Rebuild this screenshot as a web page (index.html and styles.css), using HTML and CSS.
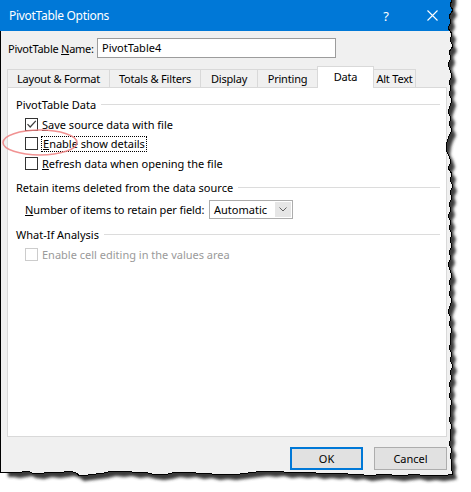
FILE: index.html
```html
<!DOCTYPE html>
<html>
<head>
<meta charset="utf-8">
<title>PivotTable Options</title>
<link rel="stylesheet" href="styles.css">
</head>
<body>
<div class="dialog">
  <div class="titlebar">
    <span class="title">PivotTable Options</span>
    <span class="tbtn help">?</span>
    <span class="tbtn close"><svg width="11" height="11" viewBox="0 0 11 11"><path d="M0.5 0.5L10.5 10.5M10.5 0.5L0.5 10.5" stroke="#fff" stroke-width="1.1" fill="none"/></svg></span>
  </div>
  <div class="body">
    <div class="name-row">
      <span class="name-label">PivotTable <u>N</u>ame:</span>
      <div class="textbox">PivotTable4</div>
    </div>
    <div class="tabs">
      <div class="tab t1">Layout &amp; Format</div>
      <div class="tab t2">Totals &amp; Filters</div>
      <div class="tab t3">Display</div>
      <div class="tab t4">Printing</div>
      <div class="tab t5 active">Data</div>
      <div class="tab t6">Alt Text</div>
    </div>
    <div class="panel">
      <div class="group g1"><span>PivotTable Data</span><span class="rule"></span></div>
      <div class="check-row first">
        <span class="box"><svg width="11" height="11" viewBox="0 0 11 11"><path d="M1.5 5.2L4.2 8L9.8 1.8" stroke="#3c3c3c" stroke-width="1.2" fill="none"/></svg></span>
        <span class="lbl"><u>S</u>ave source data with file</span>
      </div>
      <div class="check-row">
        <span class="box"></span>
        <span class="lbl focus"><u>E</u>nable show details</span>
      </div>
      <div class="check-row">
        <span class="box"></span>
        <span class="lbl"><u>R</u>efresh data when opening the file</span>
      </div>
      <div class="group g2"><span>Retain items deleted from the data source</span><span class="rule"></span></div>
      <div class="combo-row">
        <span class="combo-label"><u>N</u>umber of items to retain per field:</span>
        <div class="combo">
          <span class="combo-text">Automatic</span>
          <span class="combo-btn"><svg width="8" height="5" viewBox="0 0 8 5"><path d="M0.5 0.5L4 4L7.5 0.5" stroke="#606060" stroke-width="1" fill="none"/></svg></span>
        </div>
      </div>
      <div class="group g3"><span>What-If Analysis</span><span class="rule"></span></div>
      <div class="check-row disabled">
        <span class="box"></span>
        <span class="lbl">Enable cell editing in the values area</span>
      </div>
    </div>
    <div class="buttons">
      <div class="btn default">OK</div>
      <div class="btn">Cancel</div>
    </div>
  </div>

  <svg class="torn" width="471" height="492" viewBox="0 0 471 492">
    <defs>
      <clipPath id="outside">
        <path d="M452,0 L450,5 L453,10 L449,16 L451,22 L448,28 L452,34 L450,40 L453,46 L449,52 L451,58 L448,64 L450,70 L452,76 L449,82 L451,88 L449,94 L452,100 L450,106 L448,112 L451,118 L449,124 L452,130 L449,136 L447,142 L446,150 L449,156 L451,162 L448,168 L452,174 L450,180 L453,186 L450,192 L452,198 L449,204 L451,210 L448,216 L451,222 L449,228 L452,234 L450,240 L452,246 L449,252 L451,258 L448,264 L450,270 L452,276 L449,282 L451,288 L449,294 L452,300 L450,306 L448,312 L451,318 L449,324 L452,330 L450,336 L451,342 L449,348 L452,354 L450,360 L453,366 L450,372 L452,378 L449,384 L451,390 L449,396 L452,402 L450,408 L451,414 L449,420 L452,426 L450,432 L451,438 L449,444 L452,450 L450,456 L452,462 L451,468 L453,474 L448,475 L440,476 L432,475 L424,476 L416,474 L408,475 L400,476 L392,475 L384,474 L376,475 L368,476 L360,474 L352,475 L344,473 L336,474 L328,473 L320,474 L312,472 L304,473 L296,472 L288,473 L280,471 L272,472 L264,471 L256,472 L248,473 L240,474 L232,475 L224,474 L216,475 L208,473 L200,474 L192,472 L184,473 L176,472 L168,474 L160,475 L152,474 L144,472 L136,473 L128,471 L120,472 L112,471 L104,473 L96,474 L88,475 L80,476 L76,473 L70,471 L64,472 L56,473 L48,472 L40,474 L32,473 L28,471 L22,472 L16,473 L10,472 L0,472 L0,492 L471,492 L471,0 Z"/>
      </clipPath>
      <filter id="blur" x="-5%" y="-5%" width="110%" height="110%">
        <feGaussianBlur stdDeviation="1.8"/>
      </filter>
    </defs>
    <rect x="0" y="0" width="471" height="492" fill="#fff" clip-path="url(#outside)"/>
    <g clip-path="url(#outside)">
      <g transform="translate(4,5)" filter="url(#blur)">
        <path fill="#3a3a3a" d="M0,-20 L452,-20 L452,0 L450,5 L453,10 L449,16 L451,22 L448,28 L452,34 L450,40 L453,46 L449,52 L451,58 L448,64 L450,70 L452,76 L449,82 L451,88 L449,94 L452,100 L450,106 L448,112 L451,118 L449,124 L452,130 L449,136 L447,142 L446,150 L449,156 L451,162 L448,168 L452,174 L450,180 L453,186 L450,192 L452,198 L449,204 L451,210 L448,216 L451,222 L449,228 L452,234 L450,240 L452,246 L449,252 L451,258 L448,264 L450,270 L452,276 L449,282 L451,288 L449,294 L452,300 L450,306 L448,312 L451,318 L449,324 L452,330 L450,336 L451,342 L449,348 L452,354 L450,360 L453,366 L450,372 L452,378 L449,384 L451,390 L449,396 L452,402 L450,408 L451,414 L449,420 L452,426 L450,432 L451,438 L449,444 L452,450 L450,456 L452,462 L451,468 L453,474 L448,475 L440,476 L432,475 L424,476 L416,474 L408,475 L400,476 L392,475 L384,474 L376,475 L368,476 L360,474 L352,475 L344,473 L336,474 L328,473 L320,474 L312,472 L304,473 L296,472 L288,473 L280,471 L272,472 L264,471 L256,472 L248,473 L240,474 L232,475 L224,474 L216,475 L208,473 L200,474 L192,472 L184,473 L176,472 L168,474 L160,475 L152,474 L144,472 L136,473 L128,471 L120,472 L112,471 L104,473 L96,474 L88,475 L80,476 L76,473 L70,471 L64,472 L56,473 L48,472 L40,474 L32,473 L28,471 L22,472 L16,473 L10,472 L4,472 Z"/>
      </g>
    </g>
    <polyline fill="none" stroke="#000" stroke-width="1" shape-rendering="crispEdges"
      points="452,0 450,5 453,10 449,16 451,22 448,28 452,34 450,40 453,46 449,52 451,58 448,64 450,70 452,76 449,82 451,88 449,94 452,100 450,106 448,112 451,118 449,124 452,130 449,136 447,142 446,150 449,156 451,162 448,168 452,174 450,180 453,186 450,192 452,198 449,204 451,210 448,216 451,222 449,228 452,234 450,240 452,246 449,252 451,258 448,264 450,270 452,276 449,282 451,288 449,294 452,300 450,306 448,312 451,318 449,324 452,330 450,336 451,342 449,348 452,354 450,360 453,366 450,372 452,378 449,384 451,390 449,396 452,402 450,408 451,414 449,420 452,426 450,432 451,438 449,444 452,450 450,456 452,462 451,468 453,474 448,475 440,476 432,475 424,476 416,474 408,475 400,476 392,475 384,474 376,475 368,476 360,474 352,475 344,473 336,474 328,473 320,474 312,472 304,473 296,472 288,473 280,471 272,472 264,471 256,472 248,473 240,474 232,475 224,474 216,475 208,473 200,474 192,472 184,473 176,472 168,474 160,475 152,474 144,472 136,473 128,471 120,472 112,471 104,473 96,474 88,475 80,476 76,473 70,471 64,472 56,473 48,472 40,474 32,473 28,471 22,472 16,473 10,472 0,472"/>
  </svg>

  <svg class="mark" width="471" height="492" viewBox="0 0 471 492">
    <ellipse cx="40" cy="142.5" rx="37" ry="12.5" fill="none" stroke="#ef7f7f" stroke-opacity="0.85" stroke-width="1.6"/>
  </svg>
</div>
</body>
</html>
```

FILE: styles.css
```css
html, body {
  margin: 0;
  padding: 0;
  background: #ffffff;
}

body {
  font-family: "Noto Sans", "Open Sans", sans-serif;
  font-size: 11px;
  letter-spacing: 0;
  color: #000;
}

u {
  text-decoration: underline;
  text-underline-offset: 1px;
}

.dialog {
  position: relative;
  width: 471px;
  height: 492px;
  background: #f0f0f0;
  display: flex;
  flex-direction: column;
  overflow: hidden;
}

.titlebar {
  height: 31px;
  flex: none;
  background: #0078d7;
  color: #fff;
  display: flex;
  align-items: center;
  padding-left: 9px;
  padding-right: 16px;
}

.title {
  flex: 1;
  font-size: 12px;
  letter-spacing: -0.3px;
  line-height: 16px;
}

.tbtn {
  width: 46px;
  height: 31px;
  display: flex;
  align-items: center;
  justify-content: center;
}

.help {
  font-size: 13px;
}

.close svg {
  display: block;
}

.body {
  flex: 1;
  border-left: 1px solid #000;
  padding-left: 6px;
  display: flex;
  flex-direction: column;
}

.name-row {
  margin-top: 7px;
  height: 20px;
  display: flex;
  align-items: center;
}

.name-label {
  width: 89px;
  margin-left: 1px;
  white-space: nowrap;
  letter-spacing: -0.25px;
}

.textbox {
  width: 239px;
  height: 20px;
  box-sizing: border-box;
  border: 1px solid #9c9c9c;
  background: #fff;
  padding-left: 4px;
  line-height: 18px;
}

.tabs {
  margin-top: 8px;
  height: 21px;
  display: flex;
  align-items: flex-end;
  letter-spacing: -0.2px;
}

.tab {
  height: 18px;
  box-sizing: border-box;
  border: 1px solid #d9d9d9;
  border-bottom: none;
  margin-right: -1px;
  text-align: center;
  line-height: 17px;
  white-space: nowrap;
  background: #f0f0f0;
}

.t1 { width: 103px; }
.t2 { width: 92px; }
.t3 { width: 58px; }
.t4 { width: 61px; }
.t5 { width: 57px; }
.t6 { width: 43px; }

.tab.active {
  height: 22px;
  margin-bottom: -1px;
  background: #fff;
  position: relative;
  z-index: 1;
  line-height: 20px;
}

.panel {
  width: 440px;
  height: 350px;
  box-sizing: border-box;
  border: 1px solid #d9d9d9;
  background: #fff;
  padding: 0 6px 0 8px;
}

.group {
  height: 15px;
  display: flex;
  align-items: center;
  white-space: nowrap;
  line-height: 15px;
}

.g1 { margin-top: 9px; }
.g2 { margin-top: 7px; }
.g3 { margin-top: 8.5px; }

.rule {
  flex: 1;
  height: 1px;
  background: #dcdcdc;
  margin-left: 5px;
}

.check-row {
  height: 19.5px;
  display: flex;
  align-items: center;
  margin-left: 9px;
  white-space: nowrap;
}

.check-row.first { margin-top: 2.5px; }
.check-row.disabled { margin-top: 3px; }

.box {
  width: 13px;
  height: 13px;
  box-sizing: border-box;
  border: 1px solid #333;
  background: #fff;
  display: flex;
  align-items: center;
  justify-content: center;
  flex: none;
}

.box svg { display: block; }

.lbl {
  margin-left: 4px;
  line-height: 15px;
}

.lbl.focus {
  margin-left: 3px;
  padding: 0 1px;
  border: 1px dotted #000;
  line-height: 14px;
}

.disabled .box {
  border-color: #cccccc;
}

.disabled .lbl {
  color: #9a9a9a;
}

.combo-row {
  margin-top: 4.5px;
  height: 19px;
  display: flex;
  align-items: center;
  margin-left: 9px;
  white-space: nowrap;
}

.combo-label {
  width: 184px;
  letter-spacing: -0.1px;
}

.combo {
  width: 84px;
  height: 19px;
  box-sizing: border-box;
  border: 1px solid #adadad;
  background: #fff;
  display: flex;
  align-items: center;
}

.combo-text {
  flex: 1;
  padding-left: 4px;
}

.combo-btn {
  width: 16px;
  height: 15px;
  margin-right: 1px;
  background: #e6e6e6;
  display: flex;
  align-items: center;
  justify-content: center;
}

.combo-btn svg { display: block; }

.buttons {
  width: 440px;
  margin-top: 10px;
  display: flex;
  justify-content: flex-end;
  gap: 11px;
}

.btn {
  width: 73px;
  height: 23px;
  box-sizing: border-box;
  border: 1px solid #adadad;
  background: #e1e1e1;
  display: flex;
  align-items: center;
  justify-content: center;
}

.btn.default {
  border: 2px solid #0078d7;
}

.torn, .mark {
  position: absolute;
  left: 0;
  top: 0;
  pointer-events: none;
}
```
